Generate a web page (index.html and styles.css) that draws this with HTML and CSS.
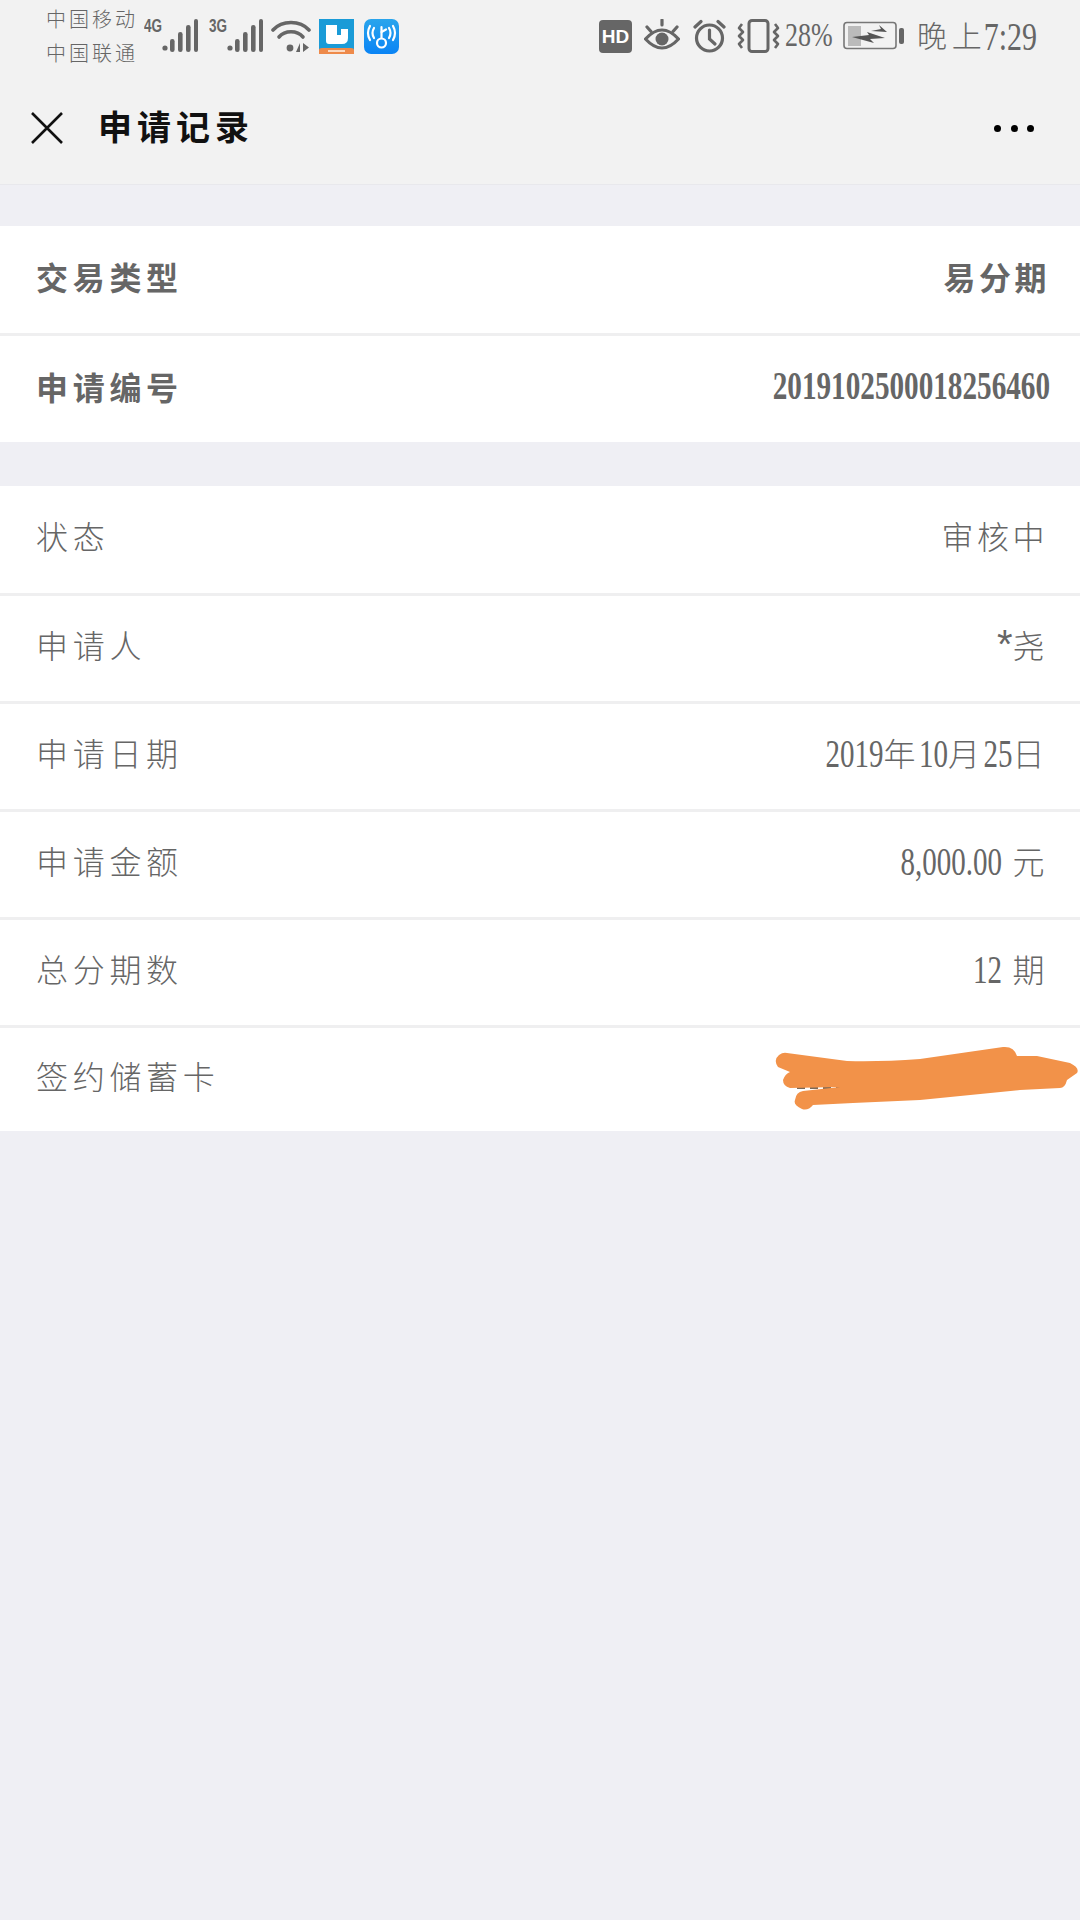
FILE: index.html
```html
<!DOCTYPE html>
<html lang="zh-CN">
<head>
<meta charset="utf-8">
<title>申请记录</title>
<link rel="stylesheet" href="styles.css">
</head>
<body>
<header class="top">
  <div class="status">
    <div class="carriers"><span>中国移动</span><span>中国联通</span></div>
    <svg class="signal first" viewBox="0 -4 54 40"><text x="0" y="14" class="net" textLength="18" lengthAdjust="spacingAndGlyphs">4G</text><g fill="#666"><circle cx="21" cy="30" r="2.6"/><rect x="26" y="21" width="4.6" height="13" rx="2.2"/><rect x="34" y="14" width="4.6" height="20" rx="2.2"/><rect x="42" y="7" width="4.6" height="27" rx="2.2"/><rect x="50" y="1" width="4" height="33" rx="2"/></g></svg>
    <svg class="signal" viewBox="0 -4 54 40"><text x="0" y="14" class="net" textLength="18" lengthAdjust="spacingAndGlyphs">3G</text><g fill="#666"><circle cx="21" cy="30" r="2.6"/><rect x="26" y="21" width="4.6" height="13" rx="2.2"/><rect x="34" y="14" width="4.6" height="20" rx="2.2"/><rect x="42" y="7" width="4.6" height="27" rx="2.2"/><rect x="50" y="1" width="4" height="33" rx="2"/></g></svg>
    <svg class="wifi" viewBox="0 0 40 34"><g fill="none" stroke="#666" stroke-width="3.6" stroke-linecap="round"><path d="M2 11 C11 1 29 1 38 11"/><path d="M8 18 C14 11 26 11 32 18"/></g><circle cx="19" cy="29" r="3.4" fill="#666"/><path d="M29 33 V24 L25 33Z M32 24 V33 L38 28.500Z" fill="#666"/></svg>
    <svg class="app" viewBox="0 0 35 35"><rect width="35" height="35" fill="#1a9bd7"/><path d="M0 35 V31 Q0 29 3 29 H32 Q35 29 35 31 V35Z" fill="#ee8a4a"/><path d="M7 6 H18 V16 H22 V10 H29 V19 Q29 25 23 25 H10 Q7 25 7 22Z" fill="#fff"/><rect x="9" y="31" width="17" height="2" fill="#fbd9c0"/></svg>
    <svg class="app second" viewBox="0 0 35 35"><defs><linearGradient id="blue" x1="0" y1="0" x2="0" y2="1"><stop offset="0" stop-color="#2aa5ec"/><stop offset="1" stop-color="#0a84f5"/></linearGradient></defs><rect width="35" height="35" rx="7" fill="url(#blue)"/><g fill="none" stroke="#fff" stroke-width="2.200" stroke-linecap="round"><path d="M10 9 Q7 14 10 19"/><path d="M6 7 Q2 14 6 21"/><path d="M25 9 Q28 14 25 19"/><path d="M29 7 Q33 14 29 21"/><path d="M17.500 8 V19"/><path d="M17.500 13 L22 10.500"/><circle cx="17.500" cy="24" r="4.500"/></g></svg>
    <div class="spacer"></div>
    <svg class="hd" viewBox="0 0 33 33"><rect width="33" height="33" rx="4" fill="#666"/><text x="16.500" y="23" class="hdtext">HD</text></svg>
    <svg class="eye" viewBox="0 0 36 34"><g fill="none" stroke="#666" stroke-width="3.200" stroke-linecap="round"><path d="M1.500 20 Q18 2 34.500 20 Q18 38 1.500 20Z"/><path d="M3 8 L7 12.500 M18 1 V6 M33 8 L29 12.500"/></g><circle cx="18" cy="20" r="6.500" fill="#666"/></svg>
    <svg class="alarm" viewBox="0 0 33 34"><g fill="none" stroke="#666" stroke-width="3.200" stroke-linecap="round"><circle cx="16.500" cy="19" r="13"/><path d="M16.500 11 V20 L22 25"/><path d="M2 8 L8 2.500 M31 8 L25 2.500"/></g></svg>
    <svg class="vib" viewBox="0 0 43 34"><g fill="none" stroke="#666" stroke-width="3" stroke-linejoin="round"><rect x="12" y="1.500" width="19" height="31" rx="3"/><path d="M5 5 L2 9 L6 13 L2 17 L6 21 L2 25 L5 29" stroke-width="2.600"/><path d="M38 5 L41 9 L37 13 L41 17 L37 21 L41 25 L38 29" stroke-width="2.600"/></g></svg>
    <span class="pct"><span class="tall">28%</span></span>
    <svg class="batt" viewBox="0 0 61 30"><rect x="1" y="1.500" width="52" height="26" rx="3" fill="none" stroke="#777" stroke-width="1.600"/><rect x="5" y="5" width="13" height="20" fill="#bbb"/><path d="M9 16 L26 14 L24 11 L42 17 L27 18 L31 22Z M28 10 L38 8 L36 4 L44 11Z" fill="#555"/><rect x="56" y="7" width="5" height="16" rx="2" fill="#666"/></svg>
    <span class="clock">晚 上<span class="tall">7:29</span></span>
  </div>
  <nav class="nav">
    <svg class="close" viewBox="0 0 32 32"><path d="M1 1 L31 31 M31 1 L1 31" stroke="#111" stroke-width="2.600" fill="none"/></svg>
    <h1>申请记录</h1>
    <div class="dots"><i></i><i></i><i></i></div>
  </nav>
</header>
<main>
  <section class="group strong">
    <div class="row"><span>交易类型</span><span>易分期</span></div>
    <div class="row"><span>申请编号</span><span class="num bold">2019102500018256460</span></div>
  </section>
  <section class="group">
    <div class="row"><span>状态</span><span>审核中</span></div>
    <div class="row"><span>申请人</span><span><span class="ast">*</span>尧</span></div>
    <div class="row"><span>申请日期</span><span><span class="num">2019</span>年<span class="num">10</span>月<span class="num">25</span>日</span></div>
    <div class="row"><span>申请金额</span><span><span class="num">8,000.00</span> 元</span></div>
    <div class="row"><span>总分期数</span><span><span class="num">12</span> 期</span></div>
    <div class="row"><span>签约储蓄卡</span>
      <svg class="scribble" viewBox="720 1020 360 130"><path d="M797 1088 H840" stroke="#7a6a5a" stroke-width="2" stroke-dasharray="8 5"/><path d="M787 1053 L847 1061 Q880 1062 920 1059 L1003 1047 Q1014 1046 1017 1056 H1037 L1070 1063 Q1080 1068 1077 1073 L1067 1080 Q1065 1088 1060 1088 L1020 1090 L920 1100 L853 1103 L813 1105 Q808 1111 802 1109 Q793 1105 795 1100 Q796 1092 803 1091 L840 1087 L790 1088 Q783 1086 783 1080 Q785 1074 790 1072 L778 1067 Q773 1060 779 1055 Q783 1052 787 1053Z" fill="#f29249"/></svg>
    </div>
  </section>
</main>
</body>
</html>
```
FILE: styles.css
```css
* { box-sizing: border-box; }
html, body { margin: 0; padding: 0; }
body {
  width: 1080px;
  height: 1920px;
  background: #efeff4;
  font-family: "Noto Sans CJK SC", "Noto Sans", sans-serif;
  overflow: hidden;
}
.top {
  background: #f2f2f2;
  border-bottom: 1px solid #e8e8ec;
  height: 185px;
}
.status {
  height: 72px;
  display: flex;
  align-items: center;
  padding: 0 43px 0 46px;
  color: #666;
}
.carriers {
  display: flex;
  flex-direction: column;
  font-size: 20px;
  font-weight: 300;
  line-height: 34px;
  letter-spacing: 3px;
  color: #666;
  width: 98px;
}
.signal { width: 54px; height: 40px; margin: 0 11px 4px 0; }
.net { font: bold 18px "Liberation Sans", sans-serif; fill: #666; }
.wifi { width: 40px; height: 34px; margin-left: -3px; margin-right: 8px; }
.app { width: 35px; height: 35px; margin-right: 10px; }
.second { margin-right: 0; }
.spacer { flex: 1; }
.hd { width: 33px; height: 33px; margin-right: 12px; }
.hdtext { font: bold 19px "Liberation Sans", sans-serif; fill: #fff; text-anchor: middle; }
.eye { width: 36px; height: 34px; margin-right: 13px; }
.alarm { width: 33px; height: 34px; margin-right: 11px; }
.vib { width: 43px; height: 34px; margin-right: 5px; }
.pct {
  font-family: "Liberation Serif", serif;
  font-size: 26px;
  width: 58px;
}
.tall { display: inline-block; transform: scaleY(1.3); font-family: "Liberation Serif", serif; }
.batt { width: 61px; height: 30px; margin-right: 13px; }
.clock {
  font-size: 30px;
  font-weight: 300;
  white-space: nowrap;
  letter-spacing: -1px;
  padding-bottom: 5px;
}
.clock .tall { letter-spacing: 0; margin-left: 3px; }
.nav {
  height: 112px;
  display: flex;
  align-items: center;
  padding: 0 46px 0 31px;
}
.close { width: 32px; height: 32px; }
h1 {
  margin: 0 0 6px 35px;
  font-size: 34px;
  font-weight: 700;
  letter-spacing: 5px;
  color: #111;
  flex: 1;
}
.dots { display: flex; gap: 9.500px; }
.dots i { width: 7px; height: 7px; border-radius: 50%; background: #000; }
.group {
  background: #fff;
  margin-top: 44px;
}
.group:first-of-type { margin-top: 41px; }
.row {
  position: relative;
  height: 108px;
  display: flex;
  justify-content: space-between;
  align-items: center;
  padding: 0 32px 9px 36px;
  border-bottom: 3px solid #efeff0;
  font-size: 32px;
  font-weight: 300;
  letter-spacing: 4.700px;
  color: #666;
}
.row:first-child { height: 110px; }
.row:last-child { height: 103px; border-bottom: 0; }
.strong .row { font-weight: 700; padding: 0 30px 7px 36px; }
.strong .row:last-child { height: 106px; }
.num {
  display: inline-block;
  font-family: "Liberation Serif", serif;
  font-size: 29px;
  letter-spacing: 0;
  transform: translateY(-3px) scaleY(1.4);
}
.row > span:last-child { letter-spacing: 3.500px; }
.row > span.bold { font-weight: 700; font-size: 29.200px; letter-spacing: 0; transform: scaleY(1.4); }
.ast { font-family: "Liberation Sans", sans-serif; font-size: 40px; line-height: 1; letter-spacing: 0; }
.scribble {
  position: absolute;
  right: 0;
  top: -8px;
  width: 360px;
  height: 130px;
}
```
